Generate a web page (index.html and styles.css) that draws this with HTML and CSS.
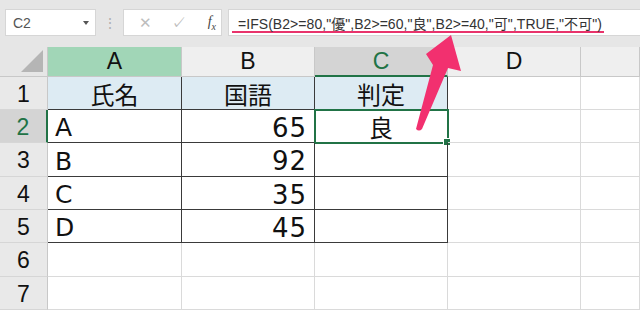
FILE: index.html
```
<!DOCTYPE html>
<html lang="ja">
  <head>
    <meta charset="UTF-8" />
    <title>IFS関数</title>
    <link rel="stylesheet" href="styles.css">
  </head>
  <body>
    <div class="bar">
      <div class="namebox">
        <span>C2</span>
        <span class="caret"></span>
      </div>
      <div class="grip">⋮</div>
      <div class="buttons">
        <span class="btn off">✕</span>
        <span class="btn off">✓</span>
        <span class="btn fx">f<sub>x</sub></span>
      </div>
      <div class="formula">
        <span class="mark">=IFS(B2&gt;=80,"優",B2&gt;=60,"良",B2&gt;=40,"可",TRUE,"不可")</span>
      </div>
    </div>

    <div class="sheet">
      <div class="corner"><span class="tri"></span></div>
      <div class="col sel-a">A</div>
      <div class="col">B</div>
      <div class="col cur">C</div>
      <div class="col">D</div>
      <div class="col"></div>

      <div class="row">1</div>
      <div class="cell d head jp">氏名</div>
      <div class="cell d head jp">国語</div>
      <div class="cell d head jp">判定</div>
      <div class="cell"></div>
      <div class="cell"></div>

      <div class="row cur">2</div>
      <div class="cell d">A</div>
      <div class="cell d num">65</div>
      <div class="cell d mid jp active">良</div>
      <div class="cell"></div>
      <div class="cell"></div>

      <div class="row">3</div>
      <div class="cell d">B</div>
      <div class="cell d num">92</div>
      <div class="cell d"></div>
      <div class="cell"></div>
      <div class="cell"></div>

      <div class="row">4</div>
      <div class="cell d">C</div>
      <div class="cell d num">35</div>
      <div class="cell d"></div>
      <div class="cell"></div>
      <div class="cell"></div>

      <div class="row">5</div>
      <div class="cell d">D</div>
      <div class="cell d num">45</div>
      <div class="cell d"></div>
      <div class="cell"></div>
      <div class="cell"></div>

      <div class="row">6</div>
      <div class="cell"></div>
      <div class="cell"></div>
      <div class="cell"></div>
      <div class="cell"></div>
      <div class="cell"></div>

      <div class="row">7</div>
      <div class="cell"></div>
      <div class="cell"></div>
      <div class="cell"></div>
      <div class="cell"></div>
      <div class="cell"></div>
    </div>

    <!-- annotation arrow pointing at the formula -->
    <svg class="arrow" width="640" height="310" viewBox="0 0 640 310">
      <path d="M451 35 L461 71 L448 68 L422 129 Q419 132 416 129 L433 65 L426 54 Z" fill="#f2306f" />
    </svg>
  </body>
</html>
```

FILE: styles.css
```
* {
  box-sizing: border-box;
  margin: 0;
  padding: 0;
}

body {
  width: 640px;
  height: 310px;
  overflow: hidden;
  position: relative;
  background-color: #fff;
  font-family: "Liberation Sans", Arial, sans-serif;
}

.bar {
  height: 47px;
  background-color: #e6e6e6;
  display: flex;
  align-items: flex-start;
  padding: 9px 0 0 5px;
}

.namebox {
  width: 91px;
  height: 27px;
  background-color: #fff;
  border: 1px solid #d6d6d6;
  display: flex;
  align-items: center;
  justify-content: space-between;
  padding: 0 6px 0 7px;
  font-size: 14px;
  color: #555;
}

.caret {
  width: 0;
  height: 0;
  border-left: 3px solid transparent;
  border-right: 3px solid transparent;
  border-top: 4px solid #555;
}

.grip {
  width: 27px;
  height: 27px;
  display: flex;
  align-items: center;
  justify-content: center;
  color: #b0b0b0;
  font-size: 14px;
}

.buttons {
  width: 99px;
  height: 27px;
  background-color: #fff;
  border: 1px solid #d6d6d6;
  display: flex;
  align-items: center;
  padding-left: 12px;
  gap: 15px;
}

.btn {
  width: 20px;
  text-align: center;
  font-size: 15px;
}

.btn.off {
  color: #bdbdbd;
}

.btn.fx {
  font-family: "Liberation Serif", serif;
  font-style: italic;
  font-size: 14px;
  color: #444;
}

.btn.fx sub {
  font-size: 10px;
}

.formula {
  flex: 1;
  height: 27px;
  margin-left: 6px;
  background-color: #fff;
  border: 1px solid #d6d6d6;
  border-right: none;
  padding-left: 3px;
  display: flex;
  align-items: flex-start;
}

.mark {
  display: inline-block;
  padding: 3px 2px 0 6px;
  height: 23px;
  font-size: 14px;
  letter-spacing: 0.05px;
  color: #333;
  font-family: "Liberation Sans", "Noto Sans CJK JP", sans-serif;
  border-bottom: 2px solid #e8336b;
}

.sheet {
  display: grid;
  grid-template-columns: 48px 134px 133px 133px 133px 59px;
  grid-template-rows: 30px 33px 33px 34px 33px 33px 34px 33px;
  font-family: "DejaVu Sans", sans-serif;
}

.corner {
  background-color: #e6e6e6;
  border-right: 1px solid #c8c8c8;
  border-bottom: 1px solid #c8c8c8;
  position: relative;
}

.tri {
  position: absolute;
  right: 4px;
  bottom: 4px;
  width: 0;
  height: 0;
  border-left: 22px solid transparent;
  border-bottom: 22px solid #b5b5b5;
}

.col {
  background-color: #efefef;
  border-right: 1px solid #c8c8c8;
  border-bottom: 1px solid #c8c8c8;
  display: flex;
  align-items: center;
  justify-content: center;
  font-family: "Liberation Sans", sans-serif;
  font-size: 23px;
  color: #111;
}

.col.sel-a {
  background-color: #a1d6b7;
}

.col.cur {
  background-color: #d4d4d4;
  color: #217346;
  border-bottom: 2px solid #217346;
}

.row {
  background-color: #e9e9e9;
  border-right: 1px solid #c8c8c8;
  border-bottom: 1px solid #d6d6d6;
  display: flex;
  align-items: center;
  justify-content: center;
  font-family: "Liberation Sans", sans-serif;
  font-size: 23px;
  color: #111;
  padding-top: 2px;
}

.row.cur {
  background-color: #d4d4d4;
  color: #217346;
  border-right: 2px solid #217346;
}

.cell {
  border-right: 1px solid #dadada;
  border-bottom: 1px solid #dadada;
  display: flex;
  align-items: center;
  padding: 3px 7px 0;
  font-size: 25px;
  color: #111;
  position: relative;
}

.cell.d {
  border-right-color: #3a3a3a;
  border-bottom-color: #3a3a3a;
}

.cell.head {
  background-color: #ddebf3;
  justify-content: center;
}

.jp {
  font-family: "Noto Sans CJK JP", sans-serif;
  font-size: 24px;
  padding-top: 0;
}

.num {
  justify-content: flex-end;
  font-size: 26px;
  letter-spacing: 1px;
  padding-right: 7px;
}

.mid {
  justify-content: center;
}

.active {
  outline: 2px solid #217346;
  outline-offset: -1px;
}

.active::after {
  content: "";
  position: absolute;
  right: -4px;
  bottom: -4px;
  width: 6px;
  height: 6px;
  background-color: #217346;
  border: 1px solid #fff;
}

.arrow {
  position: absolute;
  left: 0;
  top: 0;
  pointer-events: none;
}
```
